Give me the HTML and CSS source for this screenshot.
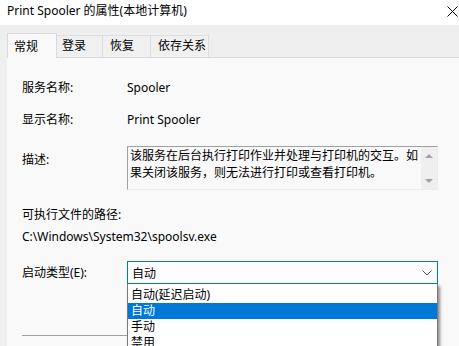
FILE: index.html
```html
<!DOCTYPE html>
<html lang="zh-CN">
<head>
    <meta charset="UTF-8">
    <title>Print Spooler 的属性(本地计算机)</title>
    <link rel="stylesheet" href="styles.css">
</head>
<body>
    <div class="titlebar">
        <span class="title">Print Spooler 的属性(本地计算机)</span>
        <svg class="close" width="11" height="11" viewBox="0 0 11 11">
            <path d="M0.5 0.5 L10.5 10.5 M10.5 0.5 L0.5 10.5" stroke="#000" stroke-width="1" fill="none"/>
        </svg>
    </div>

    <div class="dialog">
        <!-- Tabs -->
        <div class="tabs">
            <div class="tab active">常规</div>
            <div class="tab">登录</div>
            <div class="tab">恢复</div>
            <div class="tab">依存关系</div>
        </div>

        <div class="panel">
            <div class="row">
                <span class="label">服务名称:</span>
                <span class="value">Spooler</span>
            </div>
            <div class="row">
                <span class="label">显示名称:</span>
                <span class="value">Print Spooler</span>
            </div>
            <div class="row desc-row">
                <span class="label desc-label">描述:</span>
                <div class="desc-box">
                    <div class="desc-text">该服务在后台执行打印作业并处理与打印机的交互。如果关闭该服务，则无法进行打印或查看打印机。</div>
                    <div class="scrollbar">
                        <span class="arrow up"></span>
                        <span class="arrow down"></span>
                    </div>
                </div>
            </div>
            <div class="path-label">可执行文件的路径:</div>
            <div class="path">C:\Windows\System32\spoolsv.exe</div>
            <div class="row start-row">
                <span class="label">启动类型(E):</span>
                <div class="select-wrap">
                    <div class="select">
                        <span>自动</span>
                        <svg class="chevron" width="10" height="6" viewBox="0 0 10 6">
                            <path d="M0.5 0.5 L5 5 L9.5 0.5" stroke="#5a5a5a" stroke-width="1" fill="none"/>
                        </svg>
                    </div>
                    <ul class="dropdown">
                        <li>自动(延迟启动)</li>
                        <li class="selected">自动</li>
                        <li>手动</li>
                        <li>禁用</li>
                    </ul>
                </div>
            </div>
            <div class="separator"></div>
        </div>
    </div>
</body>
</html>
```

FILE: styles.css
```css
* {
    box-sizing: border-box;
    margin: 0;
    padding: 0;
}

body {
    width: 459px;
    height: 346px;
    overflow: hidden;
    font-family: "Noto Sans", "Noto Sans CJK SC", sans-serif;
    font-size: 12px;
    color: #000;
    background-color: #efefef;
}

.titlebar {
    height: 25px;
    background-color: #fff;
    display: flex;
    align-items: center;
    justify-content: space-between;
    padding: 0 1px 3px 7px;
}

.title {
    font-size: 12px;
    line-height: 16px;
}

.close {
    display: block;
}

.dialog {
    padding: 9px 0 0 7px;
}

/* Tabs */
.tabs {
    display: flex;
    align-items: flex-end;
    height: 24px;
    border-bottom: 1px solid #dadada;
}

.tab {
    height: 22px;
    line-height: 20px;
    padding: 0 0 0 7px;
    white-space: nowrap;
    border: 1px solid #dedede;
    border-bottom: none;
    border-left: none;
    background-color: #f0f0f0;
}

.tab:nth-child(2) { width: 46px; padding-left: 5px; }
.tab:nth-child(3) { width: 48px; padding-left: 7px; }
.tab:nth-child(4) { width: 58px; padding-left: 7px; }

.tab.active {
    width: 50px;
    height: 25px;
    margin-bottom: -1px;
    border-left: 1px solid #dadada;
    border-color: #dadada;
    background-color: #f9f9f9;
    line-height: 26px;
    padding-left: 6px;
}

.panel {
    position: relative;
    background-color: #f9f9f9;
    padding: 20px 0 0 15px;
    height: 300px;
}

.row {
    display: flex;
    align-items: center;
    height: 20px;
    margin-bottom: 12px;
}

.label {
    width: 105px;
    line-height: 20px;
}

.value {
    line-height: 20px;
}

.desc-row {
    height: 44px;
    align-items: flex-start;
    margin-top: 16px;
    margin-bottom: 15px;
}

.desc-label {
    margin-top: 4px;
}

.desc-box {
    width: 311px;
    height: 44px;
    display: flex;
    border-top: 1px solid #a0a0a0;
    border-left: 1px solid #a0a0a0;
    border-right: 1px solid #ececec;
    border-bottom: 1px solid #ececec;
    background-color: #f9f9f9;
}

.desc-text {
    flex: 1;
    padding: 0 0 0 2px;
    line-height: 17px;
}

.scrollbar {
    width: 16px;
    background-color: #efefef;
    display: flex;
    flex-direction: column;
    justify-content: space-between;
    align-items: center;
    padding: 7px 0 6px;
}

.arrow {
    width: 0;
    height: 0;
    border-left: 4px solid transparent;
    border-right: 4px solid transparent;
}

.arrow.up {
    border-bottom: 4px solid #a3a3a3;
}

.arrow.down {
    border-top: 4px solid #a3a3a3;
}

.path-label {
    line-height: 20px;
}

.path {
    line-height: 20px;
    margin-top: 2px;
    margin-bottom: 14px;
}

.start-row {
    height: 23px;
    margin-bottom: 0;
}

.select-wrap {
    position: relative;
}

.select {
    width: 311px;
    height: 23px;
    border: 1px solid #0078d7;
    background-color: #fdfdfd;
    display: flex;
    align-items: center;
    justify-content: space-between;
    padding: 0 4px 0 4px;
}

.chevron {
    display: block;
    margin-right: 1px;
}

.dropdown {
    position: absolute;
    top: 23px;
    left: 0;
    width: 311px;
    list-style: none;
    background-color: #fff;
    border: 1px solid #7a7a7a;
    border-top: none;
    padding-top: 3px;
    box-shadow: 2px 2px 3px rgba(0, 0, 0, 0.45);
    z-index: 2;
}

.dropdown li {
    height: 16px;
    line-height: 16px;
    padding-left: 3px;
}

.dropdown li.selected {
    background-color: #0078d7;
    color: #fff;
}

.separator {
    margin-top: 51px;
    height: 1px;
    background-color: #a0a0a0;
    width: 300px;
}
```
